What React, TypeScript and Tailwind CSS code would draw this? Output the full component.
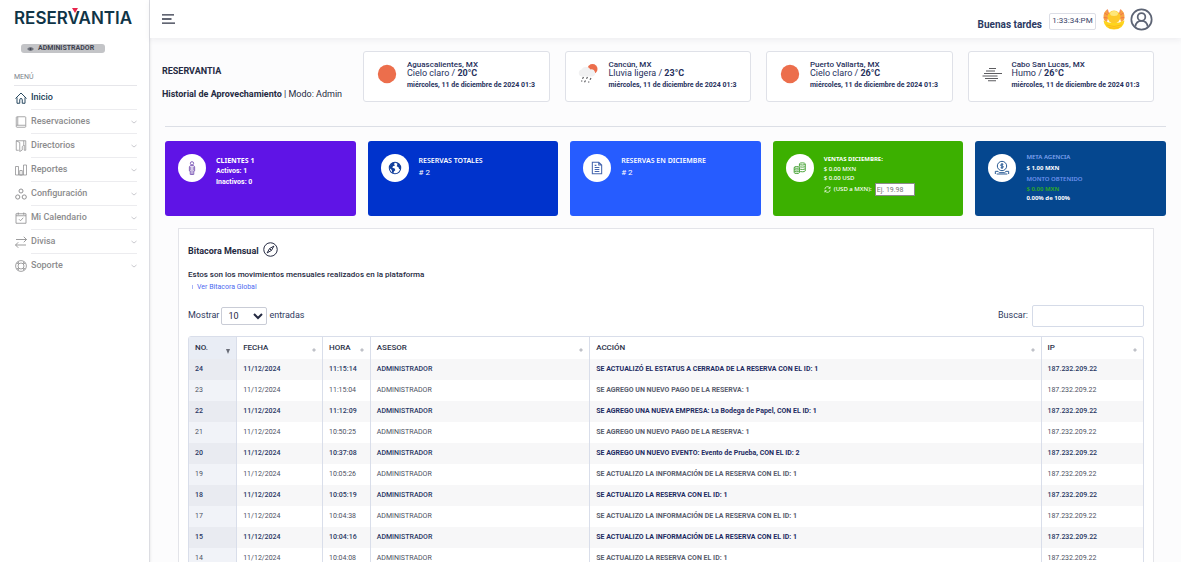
import React from "react";

type IconProps = { className?: string };

function Stroke({ className, children, width = 1.4 }: { className?: string; children: React.ReactNode; width?: number }) {
  return (
    <svg viewBox="0 0 24 24" fill="none" stroke="currentColor" strokeWidth={width} className={className} aria-hidden="true">
      {children}
    </svg>
  );
}

const HomeIcon = (p: IconProps) => (
  <Stroke width={1.9} {...p}>
    <path d="M1 13 12 2 23 13" />
    <path d="M4 11v11.500h5.500v-7a2.500 2.500 0 0 1 5 0v7H20V11" />
  </Stroke>
);
const BookIcon = (p: IconProps) => (
  <Stroke width={1.5} {...p}>
    <rect x="2.500" y="1.500" width="19" height="21" rx="1.500" />
    <path d="M3 18.500h18M5.500 2v16.500" />
  </Stroke>
);
const DirectoryIcon = (p: IconProps) => (
  <Stroke width={1.5} {...p}>
    <path d="M7.500 20.500H2.500V1.500h19v19h-3" />
    <path d="M2.500 1.500l7 3.500v18l5-3v-7l3-2.500V1.500M18.500 20.500V10" />
  </Stroke>
);
const ChartIcon = (p: IconProps) => (
  <Stroke width={1.5} {...p}>
    <path d="M1 5h6v17H1zM9.500 13h5v9h-5zM17 2h6v20h-6zM7 22h10" />
  </Stroke>
);
const CirclesIcon = (p: IconProps) => (
  <Stroke width={1.9} {...p}>
    <circle cx="12" cy="6" r="4" />
    <circle cx="5.500" cy="18" r="4.200" />
    <circle cx="18.500" cy="18" r="4.200" />
  </Stroke>
);
const CalendarIcon = (p: IconProps) => (
  <Stroke width={1.6} {...p}>
    <path d="M2 3.500h20v19H2zM2 7.500h20M6.500 1v4.500M17.500 1v4.500M8 14.500l3 3 5.500-6" />
  </Stroke>
);
const SwapIcon = (p: IconProps) => (
  <Stroke width={1.7} {...p}>
    <path d="M2 7h21M17.500 1.500 23 7l-5.500 5.500M22 18H1M6.500 12.500 1 18l5.500 5.500" />
  </Stroke>
);
const BuoyIcon = (p: IconProps) => (
  <Stroke width={1.6} {...p}>
    <circle cx="12" cy="12" r="10.800" />
    <circle cx="12" cy="12" r="6" />
    <path d="M3 6l4.500 2M6 3l2 4.500M21 6l-4.500 2M18 3l-2 4.500M3 18l4.500-2M6 21l2-4.500M21 18l-4.500-2M18 21l-2-4.500" />
  </Stroke>
);
const Chevron = (p: IconProps) => (
  <Stroke width={2.8} {...p}>
    <path d="M2 8l10 8 10-8" />
  </Stroke>
);

const menu = [
  { label: "Inicio", Icon: HomeIcon },
  { label: "Reservaciones", Icon: BookIcon },
  { label: "Directorios", Icon: DirectoryIcon },
  { label: "Reportes", Icon: ChartIcon },
  { label: "Configuración", Icon: CirclesIcon },
  { label: "Mi Calendario", Icon: CalendarIcon },
  { label: "Divisa", Icon: SwapIcon },
  { label: "Soporte", Icon: BuoyIcon },
];

function Sidebar() {
  return (
    <aside className="w-[150px] shrink-0 border-r border-[#dcdde2] bg-white pr-3 pl-3.5 shadow-sm">
      <a href="#inicio" className="relative block h-9 pt-1.5 font-['Inter',sans-serif] text-[17px] leading-6 font-semibold text-[#0f3447]">
        RESERVANTIA
        <svg viewBox="0 0 6 5" className="absolute top-2 left-[58px] h-[5px] w-[6px]" aria-hidden="true">
          <path d="M0 0h6L3 5z" fill="#e8254d" />
        </svg>
      </a>
      <div className="mt-2 ml-[7px] flex h-[9px] w-[84px] items-center gap-1 rounded-[3px] bg-[#c3c4c7] px-1.5 text-[7px] leading-none font-bold text-[#3f4350]">
        <svg viewBox="0 0 14 8" className="h-1 w-[7px]" aria-hidden="true">
          <path d="M0 4q7-8 14 0q-7 8-14 0z" fill="#73767f" />
          <circle cx="7" cy="4" r="1.800" fill="#3f4350" />
        </svg>
        ADMINISTRADOR
      </div>
      <h2 className="mt-5 h-[13px] border-b border-[#e6e6ea] text-[7px] leading-[9px] font-normal text-[#7b7f8c]">MENÚ</h2>
      <nav aria-label="Menú">
        {menu.map(({ label, Icon }, i) => (
          <a
            key={label}
            href={"#" + label.toLowerCase().replace(" ", "-")}
            className={"flex h-6 items-center gap-1 " + (i === 0 ? "text-[#1d4058]" : "text-[#8b8b8d]")}
          >
            <Icon className="ml-px size-3 shrink-0" />
            <span className={"flex h-6 flex-1 items-center justify-between text-[9px] font-medium " + (i < menu.length - 1 ? "border-b border-[#ececef]" : "")}>
              {label}
              {i > 0 && <Chevron className="size-1.5 text-[#b4b4ba]" />}
            </span>
          </a>
        ))}
      </nav>
    </aside>
  );
}

function SunriseIcon() {
  return (
    <svg viewBox="0 0 22 22" className="size-[22px]" aria-hidden="true">
      <path d="M4 1.500q-4 3-3.500 8.500Q1 13.500 4 14l2-8zM18 1.500q4 3 3.500 8.500-.5 3.500-3.500 4l-2-8z" fill="#f7a244" />
      <path d="M4.500 1.500 5.500 6M1.500 5l4 2.500M.8 9.500l4 .5M17.500 1.500l-1 4.500M20.500 5l-4 2.500M21.200 9.500l-4 .5" stroke="#f0764a" strokeWidth="1" fill="none" />
      <circle cx="11" cy="9" r="6.500" fill="#fdc92a" />
      <ellipse cx="11" cy="5.500" rx="4" ry="2.500" fill="#fee77a" />
      <path d="M.5 12.500Q11 17.500 21.500 12.500q-.5 4.500-3 6.500-3 2.500-7.500 2.500T3.500 19q-2.500-2-3-6.500z" fill="#fed51c" />
      <path d="M3.500 17q7.500 3 15 0M5.500 19.300q5.500 2 11 0" stroke="#fbb61a" strokeWidth="0.900" fill="none" />
    </svg>
  );
}

function Header() {
  return (
    <header className="z-10 flex h-[38px] shrink-0 items-center justify-between bg-white pr-7 pl-3 shadow-[0_2px_6px_rgba(60,60,90,0.08)]">
      <button type="button" aria-label="Alternar menú" className="text-[#2f3446]">
        <svg viewBox="0 0 13 10" className="h-[10px] w-[13px]" stroke="currentColor" strokeWidth="1.300" aria-hidden="true">
          <path d="M0 0.800h12M0 5h9.500M0 9.200h13" />
        </svg>
      </button>
      <div className="flex h-full items-center">
        <span className="mt-3 mr-[7px] text-[10px] leading-3 font-bold text-[#2c3a63]">Buenas tardes</span>
        <time className="mt-1 mr-[7px] flex h-[17px] w-[47px] items-center justify-center rounded-xs border border-[#dcdee6] text-[8px] text-[#3a4468]">1:33:34:PM</time>
        <SunriseIcon />
        <button type="button" aria-label="Cuenta" className="ml-[5px] text-[#5d6474]">
          <Stroke width={1.8} className="size-[23px]">
            <circle cx="12" cy="12" r="10.600" />
            <circle cx="12" cy="9.300" r="4" />
            <path d="M5.500 19.500q1-6 6.500-6t6.500 6" />
          </Stroke>
        </button>
      </div>
    </header>
  );
}

const SunIcon = () => (
  <svg viewBox="0 0 24 24" className="size-6" aria-hidden="true">
    <circle cx="12" cy="12" r="9.200" fill="#ec6e4c" />
  </svg>
);
const RainIcon = () => (
  <svg viewBox="0 0 24 24" className="size-6" aria-hidden="true">
    <circle cx="15.500" cy="7" r="5" fill="#ec6e4c" />
    <path d="M4.500 14.500a3.600 3.600 0 0 1 0-7 5 5 0 0 1 9 0 3.600 3.600 0 0 1 2 7z" fill="#f1f1f2" />
    <path d="M6.500 15l-1 1.800M10.500 15l-1 1.800M14 16l-1 1.800M8.500 18.500l-1 1.800M5 18.500l-.5 1M12 19.500l-.5 1" stroke="#5a5a5e" strokeWidth="1.200" />
  </svg>
);
const MistIcon = () => (
  <svg viewBox="0 0 24 24" className="size-6" stroke="#5c5c60" strokeWidth="1.100" aria-hidden="true">
    <path d="M9 6.500h7M6 9h9M4 11.500h18M2.500 14h15M5 16.500h13M8 18.800h8" />
  </svg>
);

const weather = [
  { city: "Aguascalientes, MX", sky: "Cielo claro", temp: "20°C", Icon: SunIcon },
  { city: "Cancún, MX", sky: "Lluvia ligera", temp: "23°C", Icon: RainIcon },
  { city: "Puerto Vallarta, MX", sky: "Cielo claro", temp: "26°C", Icon: SunIcon },
  { city: "Cabo San Lucas, MX", sky: "Humo", temp: "26°C", Icon: MistIcon },
];

function Overview() {
  return (
    <section className="flex pr-[27px] pl-3">
      <div className="w-[201px] shrink-0 pt-[14px] text-[9px] leading-3 whitespace-nowrap text-[#252a42]">
        <h1 className="font-bold">RESERVANTIA</h1>
        <p className="mt-[11px]"><span className="font-bold">Historial de Aprovechamiento</span> | Modo: Admin</p>
      </div>
      <div className="grid flex-1 grid-cols-4 gap-[15px]">
        {weather.map(({ city, sky, temp, Icon }) => (
          <article key={city} className="flex h-[51px] gap-2 rounded-[3px] border border-[#dfe1e8] bg-white pt-2 pl-[11px] text-[#26305c]">
            <div className="mt-0.5 shrink-0"><Icon /></div>
            <div className="whitespace-nowrap">
              <h2 className="text-[8px] leading-[9px] font-medium">{city}</h2>
              <p className="text-[9px] leading-[9px]">{sky} / <b>{temp}</b></p>
              <p className="mt-0.5 text-[7px] leading-[10px] font-bold">miércoles, 11 de diciembre de 2024 01:3</p>
            </div>
          </article>
        ))}
      </div>
    </section>
  );
}

function StatCard({ color, icon, children }: { color: string; icon: React.ReactNode; children: React.ReactNode }) {
  return (
    <article className={"flex h-[75px] gap-[10px] rounded-[3px] pl-[13px] font-['Noto_Sans',sans-serif] text-white " + color}>
      <div className="mt-[13px] grid size-7 shrink-0 place-items-center rounded-full bg-white">{icon}</div>
      <div className="min-w-0 whitespace-nowrap">{children}</div>
    </article>
  );
}

function Stats() {
  return (
    <section className="grid grid-cols-5 gap-3">
      <StatCard
        color="bg-[#5f14e6]"
        icon={
          <Stroke width={1.6} className="size-[14px] text-[#7a55b5]">
            <circle cx="12" cy="4" r="2.800" />
            <path d="M9 8h6l1.500 2v7H15v6H9v-6H7.500v-7zM12 16v7M10 10v6M14 10v6" />
          </Stroke>
        }
      >
        <div className="pt-[14px] font-['Roboto',sans-serif] text-[7px] leading-[11px] font-bold">
          <h2 className="font-['Noto_Sans',sans-serif]">CLIENTES 1</h2>
          <p>Activos: 1</p>
          <p>Inactivos: 0</p>
        </div>
      </StatCard>
      <StatCard
        color="bg-[#0033cc]"
        icon={
          <svg viewBox="0 0 24 24" className="size-3.5" aria-hidden="true">
            <circle cx="12" cy="12" r="9.800" fill="none" stroke="#123f9c" strokeWidth="1.800" />
            <path d="M2.500 9 7.500 3l4-.5-1 3 1.500 2-3.500 1.500-1 2.500 4 1.500 1 3-2.500 2-.5 3-2.500-1-.5-4.500-3.500-3zM14.500 3l5 2.500L22 11v3l-3-.5-1-3-3-1.500 1-3z" fill="#123f9c" />
          </svg>
        }
      >
        <div className="pt-[14px] text-[7px] leading-[12px]">
          <h2 className="font-semibold">RESERVAS TOTALES</h2>
          <p className="font-['Roboto',sans-serif] text-[8px]"># 2</p>
        </div>
      </StatCard>
      <StatCard
        color="bg-[#265cff]"
        icon={
          <Stroke width={1.8} className="size-[14px] text-[#4465ad]">
            <path d="M4 2h11l5 5v15H4zM15 2v5h5M8 11h8M8 14.500h8M8 18h8M8 7.500h3" />
          </Stroke>
        }
      >
        <div className="pt-[14px] text-[7px] leading-[12px]">
          <h2 className="font-semibold">RESERVAS EN DICIEMBRE</h2>
          <p className="font-['Roboto',sans-serif] text-[8px]"># 2</p>
        </div>
      </StatCard>
      <StatCard
        color="bg-[#3cb000]"
        icon={
          <Stroke width={1.7} className="size-[14px] text-[#4ca53c]">
            <path d="M2 11v9c0 2 9 2 9 0v-9c0-2-9-2-9 0c0 2 9 2 9 0M2 14c0 2 9 2 9 0M2 17c0 2 9 2 9 0" />
            <path d="M11 9V5c0-2.500 10-2.500 10 0v12c0 2-10 2-10 0M11 5c0 2.500 10 2.500 10 0M11 9c0 2 10 2 10 0M11 13c0 2 10 2 10 0" />
          </Stroke>
        }
      >
        <div className="pt-[13px] text-[6px] leading-[9px] font-medium">
          <h2 className="leading-[11px] font-bold">VENTAS DICIEMBRE:</h2>
          <p>$ 0.00 MXN</p>
          <p>$ 0.00 USD</p>
          <label className="flex h-[13px] items-center gap-[3px]">
            <Stroke width={2.4} className="size-[7px]">
              <path d="M3 11a9 9 0 0 1 17-4M21 2v6h-6M21 13a9 9 0 0 1-17 4M3 22v-6h6" />
            </Stroke>
            (USD a MXN):
            <input placeholder="Ej. 19.98" className="h-[13px] w-10 border border-[#8a8a8a] bg-white px-px font-['Roboto',sans-serif] text-[7px] font-normal text-[#555] placeholder:text-[#777]" />
          </label>
        </div>
      </StatCard>
      <StatCard
        color="bg-[#05478f]"
        icon={
          <Stroke width={1.5} className="size-4 text-[#2c5d96]">
            <circle cx="12" cy="9" r="7" />
            <path d="M14 6.500q-4-1-4 1t2 1.500 2 1.500-4 1M12 4.500v9M2 21v-4h4l2 2h8l2-2h4v4M4 21h16" />
          </Stroke>
        }
      >
        <div className="pt-[12px] text-[6px] leading-[9px] font-semibold">
          <h2 className="text-[#7fa3f0]">META AGENCIA</h2>
          <p className="leading-[12px] font-bold">$ 1.00 MXN</p>
          <h3 className="leading-[11px] text-[#6d92ee]">MONTO OBTENIDO</h3>
          <p className="font-bold text-[#2ba42c]">$ 0.00 MXN</p>
          <p className="font-bold">0.00% de 100%</p>
        </div>
      </StatCard>
    </section>
  );
}

const rows = [
  ["24", "11:15:14", "SE ACTUALIZÓ EL ESTATUS A CERRADA DE LA RESERVA CON EL ID: 1"],
  ["23", "11:15:04", "SE AGREGO UN NUEVO PAGO DE LA RESERVA: 1"],
  ["22", "11:12:09", "SE AGREGO UNA NUEVA EMPRESA: La Bodega de Papel, CON EL ID: 1"],
  ["21", "10:50:25", "SE AGREGO UN NUEVO PAGO DE LA RESERVA: 1"],
  ["20", "10:37:08", "SE AGREGO UN NUEVO EVENTO: Evento de Prueba, CON EL ID: 2"],
  ["19", "10:05:26", "SE ACTUALIZO LA INFORMACIÓN DE LA RESERVA CON EL ID: 1"],
  ["18", "10:05:19", "SE ACTUALIZO LA RESERVA CON EL ID: 1"],
  ["17", "10:04:38", "SE ACTUALIZO LA INFORMACIÓN DE LA RESERVA CON EL ID: 1"],
  ["15", "10:04:16", "SE ACTUALIZO LA INFORMACIÓN DE LA RESERVA CON EL ID: 1"],
  ["14", "10:04:08", "SE ACTUALIZO LA RESERVA CON EL ID: 1"],
];

const columns = [
  { label: "NO.", width: "w-[5%]" },
  { label: "FECHA", width: "w-[9%]" },
  { label: "HORA", width: "w-[5%]" },
  { label: "ASESOR", width: "w-[23%]" },
  { label: "ACCIÓN", width: "w-auto" },
  { label: "IP", width: "w-[102px]" },
];

function LogTable() {
  return (
    <div className="rounded-t-[3px] border border-[#d9deea]">
      <table className="w-full table-fixed text-left text-[7px]">
        <thead>
          <tr className="h-[22px] text-[8px] text-[#2a3047]">
            {columns.map(({ label, width }, i) => (
              <th key={label} className={width + " border-r border-[#d9deea] px-1.5 font-medium last:border-r-0 " + (i === 0 ? "bg-[#e9edf5]" : "")}>
                <button type="button" className="flex w-full items-center justify-between">
                  {label}
                  {i === 0 ? (
                    <svg viewBox="0 0 4 5" className="mt-1.5 h-[5px] w-1" aria-hidden="true"><path d="M0 0h4L2 5z" fill="#6a6d78" /></svg>
                  ) : (
                    <svg viewBox="0 0 4 4" className="mt-1 size-1" aria-hidden="true"><path d="M2 0l2 2-2 2-2-2z" fill="#bfc1c8" /></svg>
                  )}
                </button>
              </th>
            ))}
          </tr>
        </thead>
        <tbody>
          {rows.map(([no, time, action], r) => {
            const odd = r % 2 === 0;
            const cell = "border-r border-[#d9deea] px-1.5 last:border-r-0";
            return (
              <tr key={no} className={"h-[21px] whitespace-nowrap " + (odd ? "bg-[#f7f7f8] font-medium text-[#2a3763]" : "text-[#4c5062]")}>
                <td className={cell + (odd ? " bg-[#e9ebf1]" : " bg-[#f1f3f8]")}>{no}</td>
                <td className={cell}>11/12/2024</td>
                <td className={cell}>{time}</td>
                <td className={cell}>ADMINISTRADOR</td>
                <td className={cell + " font-bold" + (odd ? " text-[#1d2b62]" : " text-[#5a5e6e]")}>{action}</td>
                <td className={cell}>187.232.209.22</td>
              </tr>
            );
          })}
        </tbody>
      </table>
    </div>
  );
}

function Log() {
  return (
    <section className="mr-[27px] ml-7 mt-3 border border-[#e3e4e9] bg-white px-[9px] pt-3 text-[#252a42]">
      <h2 className="flex h-4 items-center gap-1 text-[9px] font-bold">
        <span className="pt-1.5">Bitacora Mensual</span>
        <Stroke width={1.6} className="size-[15px]">
          <circle cx="12" cy="12" r="10.800" />
          <path d="M17.500 6.500l-4 7L6.500 17.500l4-7zM10.500 10.500l3 3" />
        </Stroke>
      </h2>
      <p className="mt-3 text-[8px] leading-3 font-medium">Estos son los movimientos mensuales realizados en la plataforma</p>
      <a href="#bitacora-global" className="flex items-center gap-1 pl-1 text-[7px] leading-3 text-[#4d6af0]">
        <span className="h-1 w-px bg-[#a9b6f5]" />
        Ver Bitacora Global
      </a>
      <div className="mt-3 flex h-[22px] items-center justify-between text-[9px] text-[#2f3a60]">
        <label className="flex items-center gap-0.5">
          Mostrar
          <select defaultValue="10" className="h-[18px] w-[46px] rounded-xs border border-[#c9ccd6] bg-white pl-0.5 text-[9px] text-[#252a42]">
            <option>10</option>
            <option>25</option>
            <option>50</option>
          </select>
          entradas
        </label>
        <label className="flex items-center gap-1">
          Buscar:
          <input type="search" className="h-[22px] w-28 rounded-xs border border-[#d5dbe8] bg-white px-1.5" />
        </label>
      </div>
      <div className="mt-[9px]">
        <LogTable />
      </div>
    </section>
  );
}

export default function App() {
  return (
    <div className="flex h-screen bg-[#fcfcfd] font-['Roboto',sans-serif]">
      <Sidebar />
      <div className="flex min-w-0 flex-1 flex-col">
        <Header />
        <main className="min-h-0 flex-1 overflow-y-auto pt-[13px] [scrollbar-width:none]">
          <Overview />
          <hr className="mt-6 mr-[15px] ml-[15px] mb-[14px] border-[#dcdfe6]" />
          <div className="mr-[15px] ml-[15px]">
            <Stats />
          </div>
          <Log />
        </main>
      </div>
    </div>
  );
}
